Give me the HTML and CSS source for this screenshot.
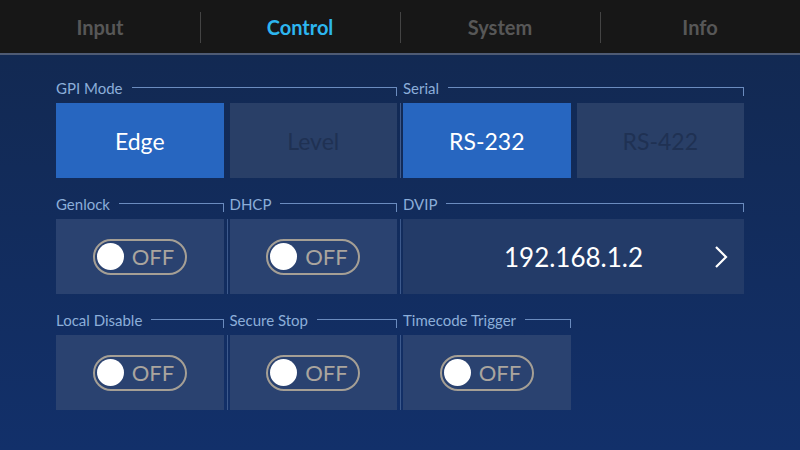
FILE: index.html
```html
<!DOCTYPE html>
<html lang="en">
<head>
    <meta charset="UTF-8">
    <meta name="viewport" content="width=device-width, initial-scale=1.0">
    <title>Control</title>
    <link rel="stylesheet" href="styles.css">
</head>
<body>

    <!-- Top tab bar -->
    <header class="tabs">
        <div class="tab">Input</div>
        <div class="tab active">Control</div>
        <div class="tab">System</div>
        <div class="tab">Info</div>
    </header>

    <main class="panel">

        <!-- Row 1: GPI mode / serial -->
        <div class="row">
            <section class="group span-2">
                <div class="group-head"><span>GPI Mode</span><i class="bracket"></i></div>
                <div class="cells two">
                    <div class="cell on">Edge</div>
                    <div class="cell dim">Level</div>
                </div>
            </section>
            <section class="group span-2 split">
                <div class="group-head"><span>Serial</span><i class="bracket"></i></div>
                <div class="cells two">
                    <div class="cell on">RS-232</div>
                    <div class="cell dim">RS-422</div>
                </div>
            </section>
        </div>

        <!-- Row 2: genlock / dhcp / dvip -->
        <div class="row">
            <section class="group">
                <div class="group-head"><span>Genlock</span><i class="bracket"></i></div>
                <div class="cells">
                    <div class="cell"><span class="toggle"><b class="knob"></b>OFF</span></div>
                </div>
            </section>
            <section class="group split">
                <div class="group-head"><span>DHCP</span><i class="bracket"></i></div>
                <div class="cells">
                    <div class="cell"><span class="toggle"><b class="knob"></b>OFF</span></div>
                </div>
            </section>
            <section class="group span-2 split">
                <div class="group-head"><span>DVIP</span><i class="bracket"></i></div>
                <div class="cells">
                    <div class="cell address">
                        192.168.1.2
                        <svg class="chevron" width="14" height="24" viewBox="0 0 14 24">
                            <path d="M2 2 L12 12 L2 22" fill="none" stroke="#ffffff" stroke-width="2.2"/>
                        </svg>
                    </div>
                </div>
            </section>
        </div>

        <!-- Row 3: misc switches -->
        <div class="row">
            <section class="group">
                <div class="group-head"><span>Local Disable</span><i class="bracket"></i></div>
                <div class="cells">
                    <div class="cell"><span class="toggle"><b class="knob"></b>OFF</span></div>
                </div>
            </section>
            <section class="group split">
                <div class="group-head"><span>Secure Stop</span><i class="bracket"></i></div>
                <div class="cells">
                    <div class="cell"><span class="toggle"><b class="knob"></b>OFF</span></div>
                </div>
            </section>
            <section class="group split">
                <div class="group-head"><span>Timecode Trigger</span><i class="bracket"></i></div>
                <div class="cells">
                    <div class="cell"><span class="toggle"><b class="knob"></b>OFF</span></div>
                </div>
            </section>
        </div>

    </main>

</body>
</html>
```

FILE: styles.css
```css
body {
    margin: 0;
    width: 800px;
    height: 450px;
    overflow: hidden;
    font-family: Lato, "Open Sans", sans-serif;
    background: linear-gradient(#12284f, #12306a);
}

/* tab bar */
.tabs {
    display: flex;
    height: 53px;
    background: #171717;
    border-bottom: 2px solid #4f5b74;
}

.tab {
    flex: 1;
    display: flex;
    align-items: center;
    justify-content: center;
    font-size: 20px;
    font-weight: bold;
    color: #575757;
    position: relative;
}

.tab + .tab::before {
    content: "";
    position: absolute;
    left: 0;
    top: 12px;
    height: 31px;
    border-left: 1px solid #444444;
}

.tab.active {
    color: #2db6ef;
}

/* panel */
.panel {
    width: 688px;
    padding: 25px 0 0 56px;
    display: flex;
    flex-direction: column;
    gap: 18px;
}

.row {
    display: grid;
    grid-template-columns: repeat(4, 1fr);
    column-gap: 6px;
}

.span-2 {
    grid-column: span 2;
}

.group-head {
    display: flex;
    height: 16px;
    margin-bottom: 7px;
    font-size: 15px;
    line-height: 16px;
    color: #8caed9;
}

.bracket {
    flex: 1;
    align-self: flex-end;
    height: 8px;
    margin-left: 9px;
    border-top: 1px solid #6b8cbf;
    border-right: 1px solid #6b8cbf;
}

.cells {
    display: grid;
    column-gap: 6px;
}

.cells.two {
    grid-template-columns: 1fr 1fr;
}

.split .cells {
    margin-left: -3px;
    padding-left: 2px;
    border-left: 1px solid #3d5a8d;
}

.cell {
    height: 75px;
    display: flex;
    align-items: center;
    justify-content: center;
    background: #2a4270;
    font-size: 23px;
    color: #ffffff;
}

.cell.on {
    background: #2766c0;
}

.cell.dim {
    background: #293f67;
    color: #1f3153;
}

.cell.address {
    position: relative;
    background: #233b68;
    font-size: 26px;
}

.chevron {
    position: absolute;
    right: 16px;
    top: 26px;
}

/* on/off switch */
.toggle {
    display: inline-flex;
    align-items: center;
    gap: 8px;
    box-sizing: border-box;
    width: 94px;
    height: 36px;
    padding-left: 2px;
    border: 2px solid #a59f95;
    border-radius: 18px;
    font-size: 22px;
    color: #aaa59e;
}

.knob {
    width: 27px;
    height: 27px;
    border-radius: 50%;
    background: #ffffff;
}
```
